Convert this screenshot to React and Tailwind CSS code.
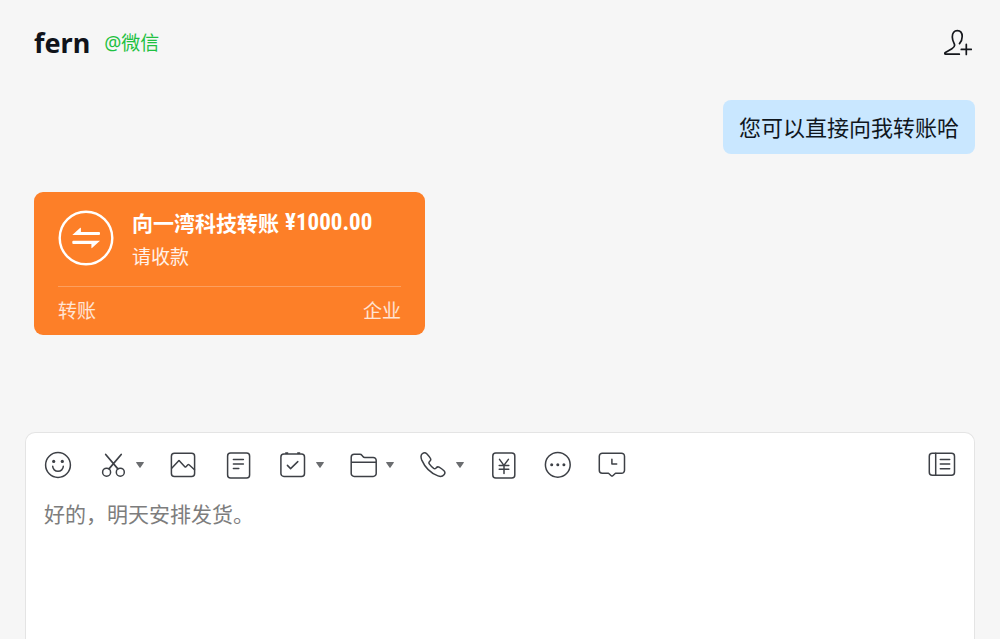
import React from "react";

function Icon({ children, className = "size-7", box = "0 0 28 28", width = 1.5 }) {
  return (
    <svg
      viewBox={box}
      className={`block shrink-0 ${className}`}
      fill="none"
      stroke="currentColor"
      strokeWidth={width}
      strokeLinecap="round"
      strokeLinejoin="round"
      aria-hidden="true"
    >
      {children}
    </svg>
  );
}

function Tool({ label, caret = false, children }) {
  return (
    <button type="button" aria-label={label} className="flex shrink-0 items-center gap-2">
      <Icon>{children}</Icon>
      {caret && (
        <svg viewBox="0 0 8 6" className="block h-1.5 w-2 fill-[#6b6d70]" aria-hidden="true">
          <path d="M.6 0h6.8a.5.5 0 0 1 .4.8L4.500 5.500a.6.6 0 0 1-1 0L.2.8A.5.5 0 0 1 .6 0z" />
        </svg>
      )}
    </button>
  );
}

function Header() {
  return (
    <header className="flex h-[86px] items-center justify-between pr-7 pl-[34px]">
      <div className="flex items-center gap-[14px]">
        <h1 className="text-[27px] leading-9 font-bold text-[#10131a]">fern</h1>
        <span className="text-[19px] leading-6 text-[#1fc142]">@微信</span>
      </div>
      <button type="button" aria-label="添加成员" className="text-[#15171c]">
        <Icon width={1.7}>
          <path d="M15.3 25.2H1.6c-1 0-1.1-1.3-.2-1.8l6.5-3.7c2.6-1.5 3.3-2.8 2.4-4.8-.9-1.9-2-3.9-2-6.9 0-4 2-6.4 5-6.4s4.9 2.4 4.9 6c0 3-1 5.2-2.7 7" />
          <path d="M22.3 15.4v10M17.3 20.4h10" />
        </Icon>
      </button>
    </header>
  );
}

function TransferCard() {
  return (
    <article className="w-[391px] max-w-full rounded-[9px] bg-[#fd7f28] px-6 text-white">
      <div className="flex items-center gap-[18px] border-b border-white/25 pt-[15px] pb-[17px]">
        <Icon className="size-14" box="0 0 56 56" width={2.4}>
          <circle cx="28" cy="28" r="26.3" />
          <path
            d="M14.3 24.9 22.3 17.8q.6-.4.6.3V22H41q1 0 1 1v1q0 1-1 1zM42 30.8 34 38q-.6.4-.6-.3V34H15.3q-1 0-1-1v-1.2q0-1 1-1z"
            fill="currentColor"
            stroke="none"
          />
        </Icon>
        <div className="flex flex-col gap-1.5">
          <h2 className="flex h-8 items-center gap-1.5 text-[21px] leading-8 font-bold">
            <span>向一湾科技转账</span>
            <span className="font-['Roboto_Condensed',Roboto,sans-serif] text-[23px] leading-8">¥1000.00</span>
          </h2>
          <p className="text-[19px] leading-6 text-white/90">请收款</p>
        </div>
      </div>
      <div className="flex h-12 items-center justify-between text-[19px] leading-6 text-white/80">
        <span>转账</span>
        <span>企业</span>
      </div>
    </article>
  );
}

function Toolbar() {
  return (
    <div className="flex items-center justify-between text-[#3d4046]">
      <div className="flex items-center gap-[26px]">
        <div className="flex items-center gap-7">
          <Tool label="表情">
            <circle cx="14" cy="14" r="12.4" />
            <circle cx="9.7" cy="10.4" r="1.6" fill="currentColor" stroke="none" />
            <circle cx="18.3" cy="10.4" r="1.6" fill="currentColor" stroke="none" />
            <path d="M8.7 15.3a5.3 5 0 0 0 10.6 0" />
          </Tool>
          <Tool label="截图" caret>
            <circle cx="6.6" cy="21.2" r="4" />
            <circle cx="20.3" cy="21.2" r="4" />
            <path d="m5.7 3.5 12.2 14.4M21.2 3.5 9 17.9" strokeWidth="1.7" />
          </Tool>
        </div>
        <div className="flex items-center gap-7">
          <Tool label="图片">
            <rect x="1.4" y="2.3" width="23.2" height="23.2" rx="3" />
            <path d="m1.7 17.3 6.8-7.4q.5-.5 1 0l5.3 5.8q.6.6 1.2 0l1.9-1.9q.6-.6 1.2 0l5.4 5" />
          </Tool>
          <Tool label="文档">
            <rect x="1.6" y="1.9" width="22" height="25" rx="3" />
            <path d="M7.4 8.4h10M7.4 12.9h10M7.4 17.4h5.4" />
          </Tool>
        </div>
        <Tool label="日程" caret>
          <rect x=".9" y="2.9" width="23.6" height="22.5" rx="3" />
          <path d="M5.8 2.1h1.8M17.8 2.1h1.8" strokeWidth="1.6" />
          <path d="m7.4 14.4 3.2 3.2 7.2-7" />
        </Tool>
        <Tool label="文件" caret>
          <path d="M1.2 6.3a3 3 0 0 1 3-3h5.7q1.3 0 2 1l1 1.2q.7.9 1.900.9h8.4a3 3 0 0 1 3 3v13a3 3 0 0 1-3 3h-19a3 3 0 0 1-3-3zM1.2 11.3h25" />
        </Tool>
        <Tool label="通话" caret>
          <path d="M2.2 2.8C3.6 1.6 5.6 1.5 6.7 2.7c1.3 1.4 2.8 3 3.8 4.8.6 1.1.2 1.9-.7 2.7-1 .9-1.2 1.7-.5 2.7 1.3 1.8 2.7 3.3 4.4 4.5.9.6 1.6.4 2.4-.5.9-1 1.9-1.3 3-.7 1.8 1 3.5 2.3 4.9 3.6 1.2 1.2 1.1 2.7 0 4-1.4 1.7-3.6 2-6 1.1-6.9-2.6-13.2-8.9-16.2-15.8C.8 6.6.8 4 2.2 2.8z" />
        </Tool>
        <Tool label="收款">
          <rect x="2.8" y="2" width="22" height="25" rx="3" />
          <path d="m9.5 8.4 4.4 6 4.5-6M14 14.4v8.2M9.2 14.5h9.6M9.2 18.3h9.6" />
        </Tool>
        <Tool label="更多">
          <circle cx="13.8" cy="13.8" r="12.4" />
          <circle cx="7.7" cy="13.8" r="1.5" fill="currentColor" stroke="none" />
          <circle cx="13.8" cy="13.8" r="1.5" fill="currentColor" stroke="none" />
          <circle cx="19.9" cy="13.8" r="1.5" fill="currentColor" stroke="none" />
        </Tool>
        <Tool label="消息记录">
          <path d="M4.3 2.2h19.2a3 3 0 0 1 3 3v14.1a3 3 0 0 1-3 3h-6l-2.7 2.4q-.8.7-1.6 0l-2.7-2.4H4.3a3 3 0 0 1-3-3V5.2a3 3 0 0 1 3-3z" />
          <path d="M13.9 8.3V13h4.8" />
        </Tool>
      </div>
      <Tool label="侧边栏">
        <rect x="1.3" y="2.3" width="25.2" height="22" rx="3" />
        <path d="M7.7 2.3v22M12.3 8.4h9.4M12.3 13.1h9.4M12.3 17.8h9.4" />
      </Tool>
    </div>
  );
}

export default function App() {
  return (
    <div className="flex min-h-screen flex-col bg-[#f6f6f6] font-['Noto_Sans','Noto_Sans_CJK_SC',sans-serif]">
      <Header />
      <main className="flex flex-1 flex-col gap-[38px] pt-[14px] pr-[25px] pb-6 pl-[34px]">
        <p className="self-end rounded-lg bg-[#c9e7ff] px-4 pt-2.5 pb-3 font-['Noto_Sans_CJK_SC',sans-serif] text-[22px] leading-8 text-[#10161d]">
          您可以直接向我转账哈
        </p>
        <TransferCard />
      </main>
      <section className="mx-[25px] flex h-[207px] flex-col gap-[18px] rounded-t-[10px] border border-b-0 border-[#e4e4e4] bg-white px-[18px] pt-[18px]">
        <Toolbar />
        <textarea
          aria-label="消息输入框"
          defaultValue="好的，明天安排发货。"
          className="block w-full flex-1 resize-none bg-transparent font-['Noto_Sans_CJK_SC',sans-serif] text-[21px] leading-8 text-[#7d7d7d] outline-none"
        />
      </section>
    </div>
  );
}
